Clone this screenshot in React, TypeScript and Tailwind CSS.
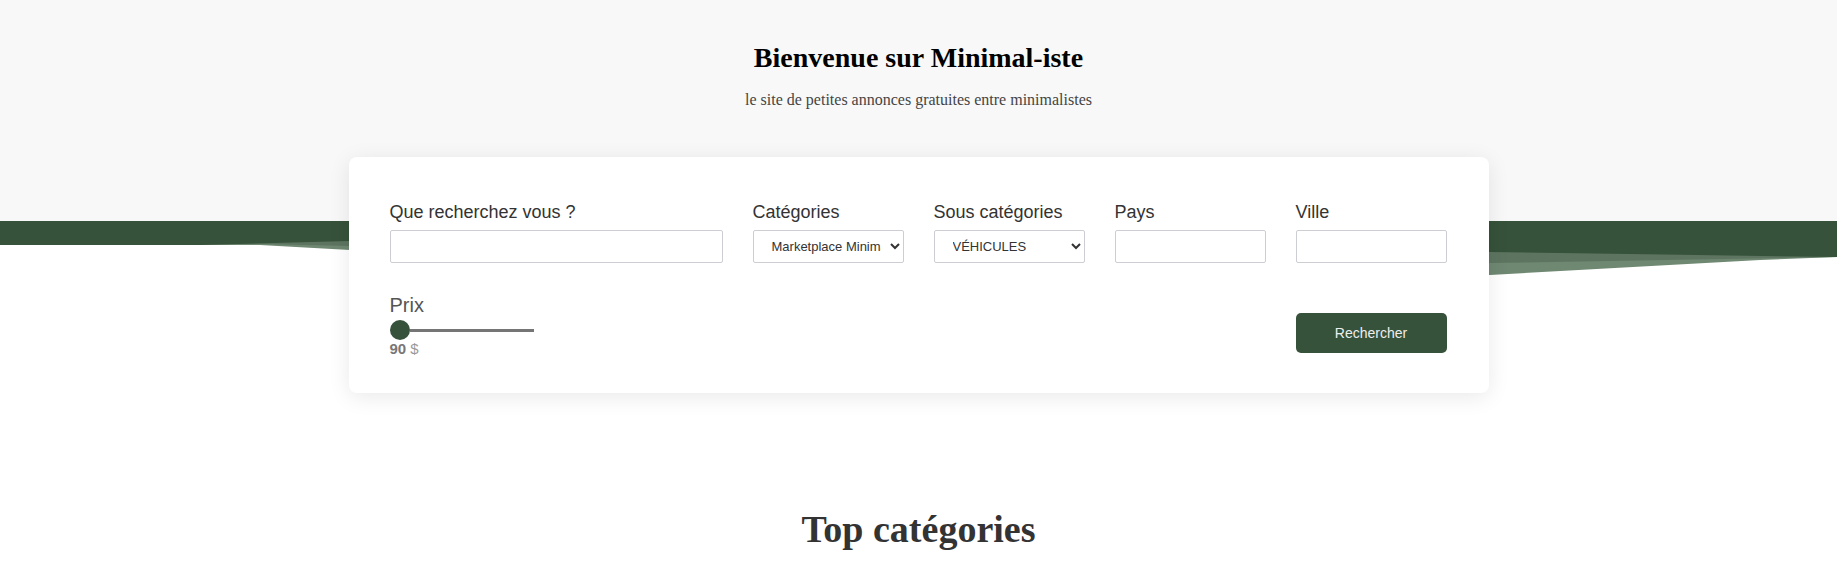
const Wave = () => (
  <svg
    className="block h-[56px] w-full"
    viewBox="0 0 1837 56"
    preserveAspectRatio="none"
  >
    <path
      d="M0 0 H1837 V36 L1760 39 L1490 54 L900 42 L350 29 L260 24 L0 24 Z"
      fill="#6f8872"
    />
    <path
      d="M0 0 H1837 V36 L1490 42 L900 33 L350 25 L260 23 L0 24 Z"
      fill="#5d7560"
    />
    <path
      d="M0 0 H1837 V36 L1490 31 L900 24 L350 20 L200 24 L0 24 Z"
      fill="#36523a"
    />
  </svg>
);

const Field = ({ label, children }: { label: string; children: React.ReactNode }) => (
  <label className="flex flex-col">
    <span className="mb-[7px] text-[18px] leading-[21px] text-[#333]">{label}</span>
    {children}
  </label>
);

const inputClass =
  "h-[33px] w-full rounded-[2px] border border-[#cdcdd4] bg-white px-[10px] text-[13px] text-[#333] outline-none";

const selectClass =
  "h-[33px] w-full rounded-[2px] border border-[#cdcdd4] bg-white pl-[14px] pr-[6px] text-[13px] text-[#333] outline-none";

const SearchCard = () => {
  return (
    <div className="relative z-10 mx-auto -mt-[120px] w-[1140px] rounded-lg bg-white pt-[45px] pr-[42px] pb-[36px] pl-[41px] shadow-[0_4px_22px_rgba(0,0,0,0.09)]">
      <div className="grid grid-cols-[333px_151px_151px_151px_151px] gap-x-[30px]">
        <Field label="Que recherchez vous ?">
          <input type="text" className={inputClass} />
        </Field>
        <Field label="Catégories">
          <select className={selectClass} defaultValue="market">
            <option value="market">Marketplace Minimaliste</option>
          </select>
        </Field>
        <Field label="Sous catégories">
          <select className={selectClass} defaultValue="vehicules">
            <option value="vehicules">VÉHICULES</option>
          </select>
        </Field>
        <Field label="Pays">
          <input type="text" className={inputClass} />
        </Field>
        <Field label="Ville">
          <input type="text" className={inputClass} />
        </Field>
      </div>

      <div className="mt-[31px] grid grid-cols-[333px_151px_151px_151px_151px] gap-x-[30px]">
        <div className="flex flex-col">
          <span className="text-[20px] leading-[22px] text-[#555]">Prix</span>
          <div className="mt-[4px] flex h-[20px] w-[144px] items-center">
            <div className="h-[20px] w-[20px] shrink-0 rounded-full bg-[#36523a]" />
            <div className="h-[3px] flex-1 bg-[#757575]" />
          </div>
          <span className="text-[15px] leading-[17px] text-[#777]">
            <b>90</b> <span className="text-[#999]">$</span>
          </span>
        </div>
        <div />
        <div />
        <div />
        <div>
          <button
            type="button"
            className="mt-[19px] h-[40px] w-full rounded-[5px] bg-[#36523a] text-[14px] text-[#eee]"
          >
            Rechercher
          </button>
        </div>
      </div>
    </div>
  );
};

const App = () => {
  return (
    <div className="min-h-screen bg-white font-['Liberation_Sans',Arial,sans-serif]">
      <header className="h-[221px] bg-[#f8f8f8] pt-[42px] text-center">
        <h1 className="font-['Liberation_Serif',serif] text-[28px] leading-[32px] font-bold text-black">
          Bienvenue sur Minimal-iste
        </h1>
        <p className="mt-[16px] font-['Liberation_Serif',serif] text-[16px] leading-[20px] text-[#444]">
          le site de petites annonces gratuites entre minimalistes
        </p>
      </header>
      <Wave />
      <SearchCard />
      <h2 className="mt-[114px] text-center font-['Liberation_Serif',serif] text-[38px] leading-[44px] font-bold text-[#333]">
        Top catégories
      </h2>
    </div>
  );
};

export default App;
